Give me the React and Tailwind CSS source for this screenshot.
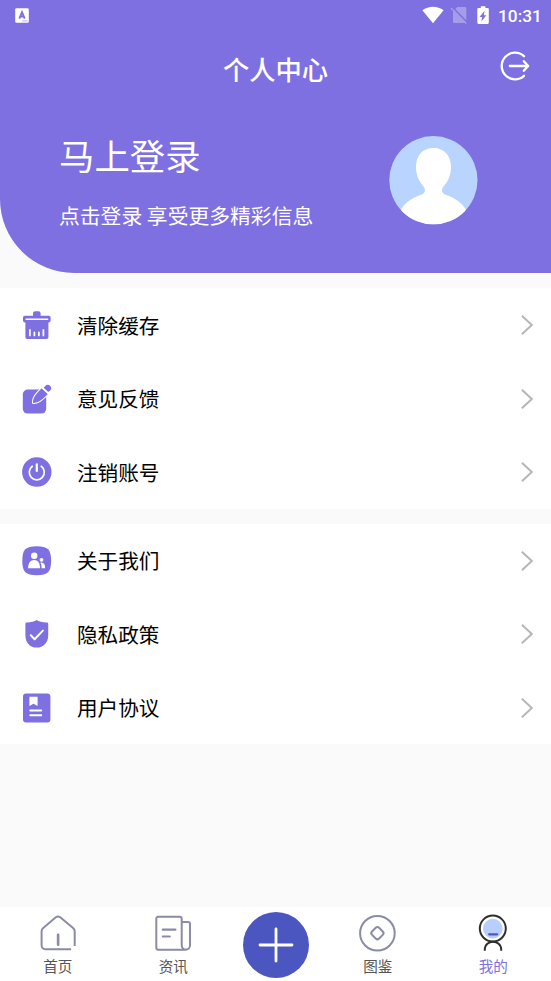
import { useState } from "react";

const CacheIcon = () => (
  <svg viewBox="0 0 30 30" className="w-[30px] h-[30px]" fill="#7e70e0">
    <path d="M11 7V3.4Q11 1.2 13.2 1.2h3.2Q18.6 1.2 18.6 3.4V7Z" />
    <rect x="1" y="5.8" width="27.6" height="6.6" rx="1.8" />
    <path d="M3.4 11h23v16.2a1.8 1.8 0 0 1-1.8 1.8H5.2a1.8 1.8 0 0 1-1.8-1.8Z" />
    <path d="M4.2 9.2h21.4" stroke="#fff" strokeWidth="1.6" strokeLinecap="round" />
    <path
      d="M7.9 19.8v5.6M12.4 22.4v3M16.9 22.4v3M21.4 19.8v5.6"
      stroke="#fff"
      strokeWidth="1.7"
      strokeLinecap="round"
    />
  </svg>
);

const FeedbackIcon = () => (
  <svg viewBox="0 0 30 30" className="w-[30px] h-[30px]" fill="#7e70e0">
    <rect x="0.8" y="5.6" width="23.4" height="24" rx="5" />
    <path
      d="M11.4 18.6C11.4 14.2 12.6 12.2 20 4.6L25.4 9.8C18.6 16.8 15.6 18.6 11.4 18.6Z"
      stroke="#fff"
      strokeWidth="3"
      strokeLinejoin="round"
    />
    <path d="M11 19C10.9 14.4 12 12.2 19.6 4.2L25.8 10.1C18.8 17.4 15.6 19 11 19Z" />
    <path d="M20 3.2L26.8 9.7" stroke="#fff" strokeWidth="1.2" />
    <path d="M21.7 3.8l1.6-1.9a3.2 3.2 0 0 1 4.8 4.7l-1.9 1.5Z" />
  </svg>
);

const PowerIcon = () => (
  <svg viewBox="0 0 30 30" className="w-[30px] h-[30px]" fill="none">
    <circle cx="14.8" cy="15" r="14.7" fill="#7e70e0" />
    <g stroke="#fff" strokeLinecap="round">
      <path d="M10.3 9.3a7.5 7.5 0 1 0 9 0" strokeWidth="1.7" />
      <path d="M14.8 7.3v6.6" strokeWidth="2.2" />
    </g>
  </svg>
);

const AboutIcon = () => (
  <svg viewBox="0 0 30 30" className="w-[30px] h-[30px]">
    <path
      d="M14.7 0.2C25.8 0.2 29.1 3.6 29.1 14.8S25.8 29.3 14.7 29.3 0.3 26 0.3 14.8 3.6 0.2 14.7 0.2Z"
      fill="#7e70e0"
    />
    <g fill="#fff">
      <circle cx="12.2" cy="9.7" r="3.2" />
      <path d="M6.1 22.2C6.1 16.8 8.5 14 12.2 14s5.8 2.9 5.8 8.2Z" />
      <circle cx="19.5" cy="13.8" r="1.9" />
      <path d="M19.6 22.2c0-2.3-.3-4-1.2-5.4 3-.9 4.8 1.6 4.8 5.4Z" />
    </g>
  </svg>
);

const ShieldIcon = () => (
  <svg viewBox="0 0 30 30" className="w-[30px] h-[30px]">
    <path
      d="M14.7 .9C16.8 2.5 20 3.4 24.9 3.4Q26.2 3.4 26.2 4.7V16.4c0 7.2-5 12.1-11.5 12.1S3.4 23.6 3.4 16.4V4.7Q3.4 3.4 4.6 3.4C9.4 3.4 12.6 2.5 14.7 .9Z"
      fill="#7e70e0"
    />
    <path
      d="M8.8 16.3l3.8 3.9 8.3-8.6"
      fill="none"
      stroke="#fff"
      strokeWidth="2"
      strokeLinecap="round"
      strokeLinejoin="round"
    />
  </svg>
);

const AgreementIcon = () => (
  <svg viewBox="0 0 30 30" className="w-[30px] h-[30px]">
    <rect x="1" y="0.4" width="27.4" height="29" rx="3" fill="#7e70e0" />
    <path d="M7.4 3.7h8.2v9.3l-4.1-2.2-4.1 2.2Z" fill="#fff" />
    <path d="M8.3 17.5h10.9M8.3 22.3h10.9" stroke="#fff" strokeWidth="2" strokeLinecap="round" />
  </svg>
);

const HomeIcon = () => (
  <svg viewBox="0 0 40 40" className="w-10 h-10" fill="none" stroke="#8a8ba6" strokeWidth="2" strokeLinecap="round">
    <path
      d="M33.1 37.2H7.2a3.6 3.6 0 0 1-3.6-3.6V19.3q0-2 1.6-3.3L17.8 5.3q2.2-1.6 4.4 0l12.9 10.7q1.6 1.3 1.6 3.3v14.8"
      strokeLinecap="butt"
      strokeLinejoin="round"
    />
    <path d="M20.1 22.8v10" strokeWidth="2.6" />
  </svg>
);

const NewsIcon = () => (
  <svg viewBox="0 0 40 40" className="w-10 h-10" fill="none" stroke="#8a8ba6" strokeWidth="2" strokeLinecap="round">
    <path d="M33 37.7H5.3a2 2 0 0 1-2-2V6.7a2 2 0 0 1 2-2H26.7a2 2 0 0 1 2 2V33.2c0 5.8 8.3 5.8 8.3 0V12.1a2 2 0 0 0-2-2H28.7" />
    <path d="M9.8 17.7h12.6M9.8 24.5h7" strokeWidth="2.2" />
  </svg>
);

const AtlasIcon = () => (
  <svg viewBox="0 0 40 40" className="w-10 h-10" fill="none" stroke="#8a8ba6" strokeWidth="2">
    <circle cx="19.4" cy="21.2" r="17.3" />
    <rect x="14.4" y="16.2" width="10" height="10" rx="2.4" transform="rotate(45 19.4 21.2)" />
  </svg>
);

const MineIcon = () => (
  <svg viewBox="0 0 40 40" className="w-10 h-10" fill="none">
    <circle cx="19.8" cy="16.6" r="13" stroke="#2f2f2f" strokeWidth="2" />
    <circle cx="19.8" cy="16.6" r="9.8" fill="#b7ceff" />
    <path d="M16.2 22.3h8" stroke="#4c58bf" strokeWidth="2.3" strokeLinecap="round" />
    <path d="M11.8 38.8v-1.2c0-10.4 16.4-10.4 16.4 0v1.2" stroke="#2f2f2f" strokeWidth="2" />
  </svg>
);

const MENU_GROUPS = [
  [
    { label: "清除缓存", Icon: CacheIcon },
    { label: "意见反馈", Icon: FeedbackIcon },
    { label: "注销账号", Icon: PowerIcon },
  ],
  [
    { label: "关于我们", Icon: AboutIcon },
    { label: "隐私政策", Icon: ShieldIcon },
    { label: "用户协议", Icon: AgreementIcon },
  ],
];

const StatusBar = () => (
  <div className="flex items-center justify-between h-[30px] pl-[15px] pr-[10px]">
    <svg viewBox="0 0 14 15" className="w-3.5 h-[15px]">
      <rect x="0.2" y="0.2" width="13.6" height="14.6" rx="1.2" fill="#fff" />
      <path d="M4.3 10.6L7 4.1l2.7 6.5M5.3 8.5h3.4" fill="none" stroke="#7e70e0" strokeWidth="1.8" />
      <path d="M7.2 12.9h5.4" stroke="#b9b1ee" strokeWidth="1" />
    </svg>
    <div className="flex items-center">
      <svg viewBox="0 0 22 18" className="w-[22px] h-[18px]">
        <path d="M11 17.2L.4 4.3C6.6-.5 15.4-.5 21.6 4.3Z" fill="#fff" />
      </svg>
      <svg viewBox="0 0 18 18" className="w-[18px] h-[18px] ml-[6px]">
        <path d="M7.3 1H15q1.3 0 1.3 1.2v13.6q0 1.2-1.3 1.2H4.2Q3 17 3 15.8V5.2Z" fill="#a69cea" />
        <path d="M2 .8l15.6 16" stroke="#7e70e0" strokeWidth="1.6" />
        <path d="M1 2l15.2 15.6" stroke="#a69cea" strokeWidth="1.3" />
      </svg>
      <svg viewBox="0 0 12 18" className="w-3 h-[18px] ml-[9px]">
        <path d="M3.8.2h4.6v1.7h2.2q1.2 0 1.2 1.2v13.7q0 1.1-1.2 1.1H1.5Q.3 17.9.3 16.8V3.1q0-1.2 1.2-1.2h2.3Z" fill="#fff" />
        <path d="M7.6 4.7L2.6 10.9h2.6L4.3 15.5 9.4 9.2H6.8Z" fill="#7e70e0" />
      </svg>
      <span className="ml-[9px] mt-[3px] w-[43px] font-[Roboto,sans-serif] font-medium text-[17.3px] leading-none whitespace-nowrap">
        10:31
      </span>
    </div>
  </div>
);

const Avatar = () => (
  <svg viewBox="0 0 89 89" className="w-[89px] h-[89px]">
    <defs>
      <clipPath id="avatar-clip">
        <circle cx="44.4" cy="44.2" r="44.1" />
      </clipPath>
    </defs>
    <g clipPath="url(#avatar-clip)">
      <rect width="89" height="89" fill="#b8d4ff" />
      <path
        d="M44.4 12C55.4 12 62 20 62 30.6 62 40.3 58.5 46.4 53.8 51.4Q51.6 55.8 55.4 58.3C66.5 62.2 72.9 67 76.7 73.3V89H12.2V73.3C16 67 22.3 62.2 33.4 58.3Q37.2 55.8 35.2 51.4C30.6 46.4 27 40.3 27 30.6 27 20 33.4 12 44.4 12Z"
        fill="#fff"
      />
    </g>
  </svg>
);

const MenuRow = ({ label, Icon }) => (
  <button className="flex items-center w-full h-[73.5px] pl-[22px] pr-[17px]">
    <Icon />
    <span className="ml-[25px] pb-px flex-1 text-left text-[20.6px] leading-[30px] text-black">{label}</span>
    <svg viewBox="0 0 14 22" className="w-[14px] h-[22px]" fill="none">
      <path d="M1.9 1.7L11.8 11 1.9 20.3" stroke="#b6b6b6" strokeWidth="2" />
    </svg>
  </button>
);

const TabItem = ({ label, Icon, active, onClick }) => (
  <button onClick={onClick} className="flex flex-col items-center w-[115.5px] h-full pt-[5px]">
    <Icon />
    <span className={`mt-[4px] text-[14.6px] leading-[20px] ${active ? "text-[#7e70e0]" : "text-[#555]"}`}>
      {label}
    </span>
  </button>
);

const App = () => {
  const [tab, setTab] = useState("mine");

  return (
    <div className="flex flex-col w-full h-screen overflow-hidden bg-[#fafafa] font-['Noto_Sans_CJK_SC',sans-serif]">
      <header className="h-[273.3px] shrink-0 bg-[#7e70e0] rounded-bl-[74px] text-white">
        <StatusBar />
        <div className="grid grid-cols-[1fr_auto_1fr] items-center h-[74px] pt-1 pr-[21px]">
          <h1 className="col-start-2 pl-[21px] text-[26.3px] leading-[40px] font-medium">个人中心</h1>
          <button className="justify-self-end pb-[6px]">
            <svg viewBox="0 0 30 30" className="w-[30px] h-[30px]" fill="none" stroke="#fff" strokeWidth="2.3" strokeLinecap="round">
              <path d="M24 5.2A13.3 13.3 0 1 0 24 24.8" />
              <path d="M9.8 15h18.2M23.8 10.2L28.2 15 23.8 19.8" strokeLinejoin="round" />
            </svg>
          </button>
        </div>
        <div className="flex items-start justify-between pl-[59px] pr-[73px]">
          <div className="pt-[25px]">
            <p className="text-[35.4px] leading-[52px]">马上登录</p>
            <p className="mt-[19px] text-[20.8px] leading-[30px]">点击登录 享受更多精彩信息</p>
          </div>
          <div className="pt-[32px]">
            <Avatar />
          </div>
        </div>
      </header>

      <main className="flex-1 flex flex-col gap-[15px] pt-[15px]">
        {MENU_GROUPS.map((group, i) => (
          <section key={i} className="bg-white">
            {group.map((item) => (
              <MenuRow key={item.label} {...item} />
            ))}
          </section>
        ))}
      </main>

      <nav className="flex items-start h-[74px] shrink-0 bg-white">
        <TabItem label="首页" Icon={HomeIcon} active={tab === "home"} onClick={() => setTab("home")} />
        <TabItem label="资讯" Icon={NewsIcon} active={tab === "news"} onClick={() => setTab("news")} />
        <div className="flex-1 flex justify-center pt-[4.5px]">
          <button className="flex items-center justify-center w-[66px] h-[66px] rounded-full bg-[#4c56c0]">
            <svg viewBox="0 0 36 36" className="w-9 h-9" stroke="#fff" strokeWidth="2.8" strokeLinecap="round">
              <path d="M18 2v32M2 18h32" />
            </svg>
          </button>
        </div>
        <TabItem label="图鉴" Icon={AtlasIcon} active={tab === "atlas"} onClick={() => setTab("atlas")} />
        <TabItem label="我的" Icon={MineIcon} active={tab === "mine"} onClick={() => setTab("mine")} />
      </nav>
    </div>
  );
};

export default App;
